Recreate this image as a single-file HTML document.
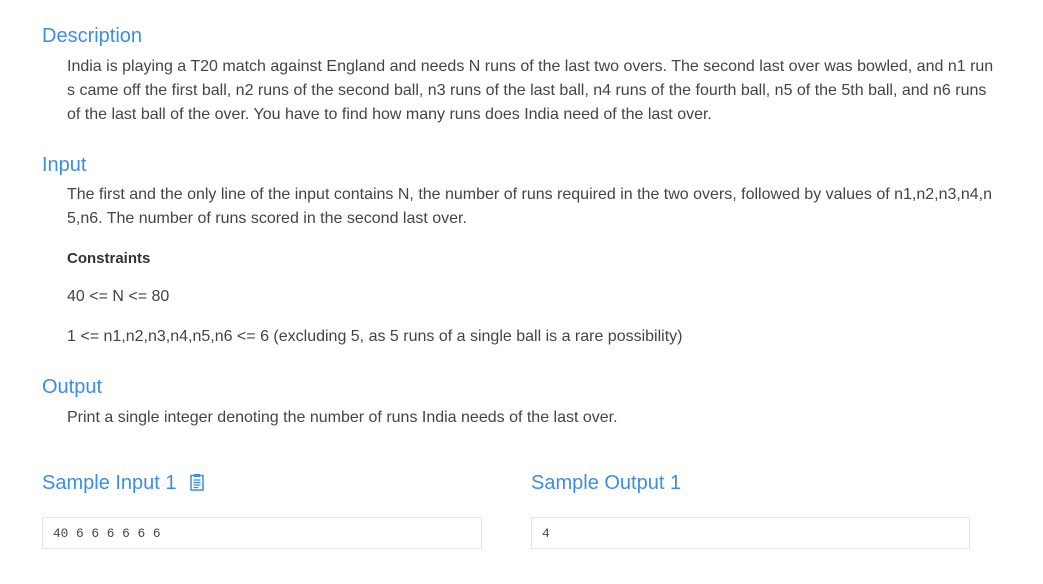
<!DOCTYPE html>
<html><head><style>
body{margin:0;width:1043px;height:584px;background:#fff;font-family:"Liberation Sans",Arial,sans-serif;position:relative;overflow:hidden}
.h{position:absolute;left:42px;color:#3d8ee0;font-size:20px;line-height:28px;white-space:nowrap}
.t{position:absolute;left:67px;color:#444;font-size:16px;line-height:24px;white-space:nowrap;letter-spacing:0}
.b{font-weight:bold;color:#333;font-size:15px}
.box{position:absolute;top:517px;height:32px;border:1px solid #e4e4e4;font-family:"Liberation Mono",monospace;font-size:12.8px;line-height:31px;color:#444;padding-left:10px;box-sizing:border-box}
</style></head><body>
<div class="h" style="top:22px">Description</div>
<div class="t" style="top:55px">India is playing a T20 match against England and needs N runs of the last two overs. The second last over was bowled, and n1 run</div>
<div class="t" style="top:79px">s came off the first ball, n2 runs of the second ball, n3 runs of the last ball, n4 runs of the fourth ball, n5 of the 5th ball, and n6 runs</div>
<div class="t" style="top:103px">of the last ball of the over. You have to find how many runs does India need of the last over.</div>
<div class="h" style="top:151px">Input</div>
<div class="t" style="top:183px">The first and the only line of the input contains N, the number of runs required in the two overs, followed by values of n1,n2,n3,n4,n</div>
<div class="t" style="top:207px">5,n6. The number of runs scored in the second last over.</div>
<div class="t b" style="top:247px">Constraints</div>
<div class="t" style="top:285px">40 &lt;= N &lt;= 80</div>
<div class="t" style="top:325px">1 &lt;= n1,n2,n3,n4,n5,n6 &lt;= 6 (excluding 5, as 5 runs of a single ball is a rare possibility)</div>
<div class="h" style="top:373px">Output</div>
<div class="t" style="top:406px">Print a single integer denoting the number of runs India needs of the last over.</div>
<div class="h" style="top:469px">Sample Input 1
<svg width="14" height="18" viewBox="0 0 14 18" style="vertical-align:-2px;margin-left:8px"><rect x="1" y="2.5" width="12" height="14.5" fill="none" stroke="#3d8ee0" stroke-width="1.5"/><rect x="4" y="1" width="6" height="3" fill="#3d8ee0"/><path d="M3.5 7h7M3.5 9.5h7M3.5 12h7M3.5 14.5h5" stroke="#3d8ee0" stroke-width="1.2"/></svg></div>
<div class="h" style="top:469px;left:531px">Sample Output 1</div>
<div class="box" style="left:42px;width:440px">40 6 6 6 6 6 6</div>
<div class="box" style="left:531px;width:439px">4</div>
</body></html>
